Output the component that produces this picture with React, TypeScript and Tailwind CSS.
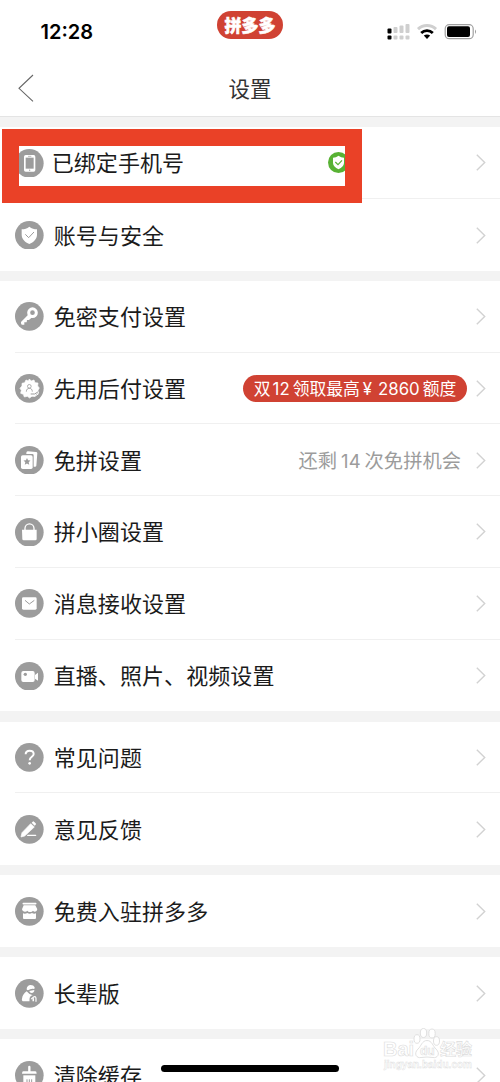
import type { ReactNode } from "react";

const dark = "#9c9c9c";

const glyphs: Record<string, ReactNode> = {
  phone: (
    <>
      <rect x="27" y="18" width="34" height="50" rx="5" fill="#fff" />
      <rect x="32" y="26" width="24" height="33" fill={dark} />
      <path d="M39 22h10" stroke={dark} strokeWidth="2" />
      <circle cx="44" cy="63.5" r="2" fill={dark} />
    </>
  ),
  shield: (
    <>
      <path d="M43 17C50 23 58 24 66 25V41C66 54 56 63 43 69C30 63 20 54 20 41V25C29 24 36 23 43 17Z" fill="#fff" />
      <path d="M31 40l10 10 16-17" fill="none" stroke={dark} strokeWidth="3" />
    </>
  ),
  key: (
    <>
      <circle cx="52.5" cy="32" r="11.5" fill="none" stroke="#fff" strokeWidth="9" />
      <path d="M41 37L18 60q-1 4 2 8h8v-7h7l1-7h6l10-9z" fill="#fff" />
    </>
  ),
  badge: (
    <>
      <path
        d="M43 15l6 6 8-3 3 8 9 1-1 9 5 6-4 7 2 8-7 2-4 8-9-1-7 6-7-5-9 2-3-8-8-3 2-9-4-6 6-7v-8l8-2 4-8 7 3z"
        fill="#fff"
        stroke="#fff"
        strokeWidth="2"
        strokeLinejoin="round"
      />
      <circle cx="43" cy="37" r="5.5" fill="none" stroke={dark} strokeWidth="2.5" />
      <path d="M34 53c0-7 4-10 9-10s9 3 9 10" fill="none" stroke={dark} strokeWidth="2.5" />
      <path d="M47 60h12l11-7" fill="none" stroke={dark} strokeWidth="3" />
      <path d="M47 66h14l10-7" fill="none" stroke="#fff" strokeWidth="3" />
    </>
  ),
  cards: (
    <>
      <path d="M34 20q1-4 5-4l24 2q4 0 4 4l-3 37q0 3-4 3h-4V28q0-4-4-4H34z" fill="#fff" />
      <rect x="18" y="28" width="35" height="41" rx="5" fill="#fff" />
      <path d="M36 36l3.3 7 7.2.8-5.4 4.9 1.6 7.3-6.7-3.8-6.7 3.8 1.6-7.3-5.4-4.9 7.2-.8z" fill={dark} />
    </>
  ),
  lock: (
    <>
      <path d="M30 37v-6a13 13 0 0 1 27 0v6" fill="none" stroke="#fff" strokeWidth="4" />
      <path d="M21 35H65V63q0 4-4 4H26q-4 0-4-4z" fill="#fff" />
    </>
  ),
  mail: (
    <>
      <rect x="21" y="25" width="44" height="37" rx="4" fill="#fff" />
      <path d="M30 34l13 11 15-11" fill="none" stroke={dark} strokeWidth="3" />
    </>
  ),
  camera: (
    <>
      <rect x="19" y="27" width="40" height="33" rx="6" fill="#fff" />
      <path d="M60 39l9-7v24l-9-6z" fill="#fff" />
      <circle cx="31" cy="37" r="5" fill={dark} />
    </>
  ),
  question: (
    <>
      <path d="M32 34c0-7 5-11 12-11s12 4 12 10c0 9-12 8-12 19" fill="none" stroke="#fff" strokeWidth="6" />
      <circle cx="44" cy="61" r="4" fill="#fff" />
    </>
  ),
  pen: (
    <>
      <path d="M47 26l11 10-29 27-11 3 3-13z" fill="#fff" stroke="#fff" strokeWidth="2" strokeLinejoin="round" />
      <path d="M50 23l3-3q2-2 4 0l5 5q2 2 0 4l-3 3z" fill="#fff" />
      <path d="M38 61H62" stroke="#fff" strokeWidth="4" strokeLinecap="round" />
    </>
  ),
  shop: (
    <>
      <path d="M25 20H62" stroke="#fff" strokeWidth="5" strokeLinecap="round" />
      <path d="M26 25H61L67 37q-1 7-7 7-4 0-6-3-3 5-10 4-5 0-7-4-3 4-8 3-7 0-8-7z" fill="#fff" />
      <path d="M24 49q6 3 13-1 7 5 14 0 6 4 12 1V63q0 3-3 3H27q-3 0-3-3z" fill="#fff" />
    </>
  ),
  elder: (
    <>
      <path d="M35 30q1-11 12-12 9 0 12 7l-1 5q-11-2-19 4-5-1-4-4z" fill="#fff" />
      <path d="M43 36l15-3q0 8-8 9-6 0-7-6z" fill="#fff" />
      <path d="M35 37q7 9 15 10 9 7 7 20H26q-7-1-5-8 2-14 14-22z" fill="#fff" />
      <path d="M48 69V60q1-7 6-7 8-1 8 6v9" fill="none" stroke={dark} strokeWidth="9" />
      <path d="M49 60l7-6q6-3 7 4v10" fill="none" stroke="#fff" strokeWidth="3.5" />
    </>
  ),
  brush: (
    <>
      <path d="M43 18V32" stroke="#fff" strokeWidth="7" strokeLinecap="round" />
      <path d="M25 31H61Q65 31 65 38H21Q21 31 25 31Z" fill="#fff" />
      <path d="M25 43H61V71H25Z" fill="#fff" />
      <path d="M36 55V72M43 55V72M50 55V72" stroke={dark} strokeWidth="3" />
    </>
  ),
};

type Row = { icon: string; label: string; note?: boolean; promo?: boolean };

const sections: Row[][] = [
  [
    { icon: "phone", label: "已绑定手机号" },
    { icon: "shield", label: "账号与安全" },
  ],
  [
    { icon: "key", label: "免密支付设置" },
    { icon: "badge", label: "先用后付设置", promo: true },
    { icon: "cards", label: "免拼设置", note: true },
    { icon: "lock", label: "拼小圈设置" },
    { icon: "mail", label: "消息接收设置" },
    { icon: "camera", label: "直播、照片、视频设置" },
  ],
  [
    { icon: "question", label: "常见问题" },
    { icon: "pen", label: "意见反馈" },
  ],
  [{ icon: "shop", label: "免费入驻拼多多" }],
  [{ icon: "elder", label: "长辈版" }],
  [{ icon: "brush", label: "清除缓存" }],
];

function StatusBar() {
  return (
    <div className="grid h-[60px] grid-cols-[1fr_66px_1fr] items-start pr-[23px] pl-[23px]">
      <div className="pt-[18px] pl-[17.5px] text-[20px] leading-7 font-semibold text-black">12:28</div>
      <div className="mt-[11px] flex h-[28px] w-[66px] items-center justify-center rounded-full bg-[#d04233] pb-px font-['Noto_Sans_CJK_SC',sans-serif] text-[17px] leading-none font-black text-white [-webkit-text-stroke:0.5px_white]">
        拼多多
      </div>
      <svg className="mt-[22px] h-[20px] w-[92px] justify-self-end" viewBox="385 22 92 20">
        <g fill="#cfcfcf">
          <rect x="393.5" y="27" width="4" height="6" rx="1" />
          <rect x="399.5" y="25.5" width="4" height="7.5" rx="1" />
          <rect x="405.5" y="24" width="4" height="9" rx="1" />
          <rect x="393.5" y="35.5" width="4" height="4" rx="1" />
          <rect x="399.5" y="35.5" width="4" height="4" rx="1" />
          <rect x="405.5" y="35.5" width="4" height="4" rx="1" />
        </g>
        <rect x="387.5" y="28.5" width="4" height="5" rx="1" />
        <rect x="387.5" y="35.5" width="4" height="4" rx="1" />
        <path d="M418 29.2a13 13 0 0 1 18 0" fill="none" stroke="#cfcfcf" strokeWidth="3" />
        <path d="M421.2 33a8.4 8.4 0 0 1 11.6 0" fill="none" stroke="#000" strokeWidth="2.8" />
        <path d="M423.8 35.6q3.2-2.4 6.4 0l-3.2 3.4z" />
        <rect x="445.2" y="24.7" width="28" height="14" rx="4" fill="none" stroke="#a0a0a0" strokeWidth="1.2" />
        <rect x="447" y="26.3" width="23" height="10.8" rx="2" />
        <path d="M475 29.5q2 2 0 4.5z" fill="#999" />
      </svg>
    </div>
  );
}

function SettingRow({ row, divider }: { row: Row; divider: boolean }) {
  return (
    <div className="flex h-[71.75px] pl-[15px]">
      <div className={"flex flex-1 items-center pt-px pr-[14px] " + (divider ? "border-b border-[#f0f0f0]" : "")}>
        <svg className="size-[28.67px] shrink-0" viewBox="0 0 86 86">
          <circle cx="43" cy="43" r="43" fill={dark} />
          {glyphs[row.icon]}
        </svg>
        <span
          className={
            "flex-1 pt-[2px] text-[22px] tracking-[0.08px] whitespace-nowrap text-[#1b1b1b] " +
            (row.icon === "phone" ? "pl-[8px]" : "pl-[10px]")
          }
        >
          {row.label}
        </span>
        {row.icon === "phone" && (
          <svg className="mr-[127px] size-[21px]" viewBox="0 0 63 63">
            <circle cx="31.5" cy="31.5" r="31.5" fill="#58b234" />
            <path d="M31.5 11Q39 17 48 17V33Q47 45 31.5 52Q16 45 15 33V17Q24 17 31.5 11Z" fill="#fff" />
            <path d="M22 30l8 8 12-13" fill="none" stroke="#58b234" strokeWidth="3.5" />
          </svg>
        )}
        {row.promo && (
          <span className="mr-[9px] flex h-[27.5px] w-[224px] items-center justify-center rounded-full bg-[#d04233] pt-[2px] text-[16.8px] whitespace-nowrap text-white">
            双<span className="mr-[3px] ml-[2px]">12</span>领取最高<span className="ml-[3px]">¥</span>
            <span className="mr-[3px] ml-[6px]">2860</span>额度
          </span>
        )}
        {row.note && (
          <span className="mr-[15px] pt-[2px] text-[19.3px] whitespace-nowrap text-[#9c9c9c]">
            还剩<span className="mr-[4px] ml-[4px] text-[18.5px]">14</span>次免拼机会
          </span>
        )}
        <svg className="h-[17px] w-[10px] shrink-0" viewBox="0 0 10 17">
          <path d="M.8 .8L8.7 8.5.8 16.2" fill="none" stroke="#d2d2d2" strokeWidth="1.4" />
        </svg>
      </div>
    </div>
  );
}

function Watermark() {
  return (
    <svg className="absolute top-[1026px] left-[380px] h-[46px] w-[98px]" viewBox="380 1026 98 46">
      <g fill="#fff" stroke="#dcdcdc" strokeWidth=".9">
        <ellipse cx="417" cy="1039" rx="3" ry="4.3" />
        <ellipse cx="423.5" cy="1033" rx="3.2" ry="4.5" />
        <ellipse cx="432" cy="1033.5" rx="3.2" ry="4.5" />
        <ellipse cx="436.5" cy="1041" rx="3" ry="4.3" />
        <path d="M427 1040.5c5 0 6 6 9 8.500 5 5 1 9.500-3 8.500q-6-1-12 0c-4 1-8-3.500-3-8.500 3-2.500 4-8.500 9-8.500z" />
      </g>
      <g
        className="font-['Liberation_Sans','Noto_Sans_CJK_SC',sans-serif] font-bold"
        fill="#fff"
        stroke="#dcdcdc"
        strokeWidth=".6"
      >
        <text x="383" y="1056" fontSize="20" textLength="31">Bai</text>
        <text x="420" y="1055" fontSize="12">du</text>
        <text x="440" y="1055" fontSize="16">经验</text>
        <text x="384" y="1068" fontSize="10" strokeWidth=".4" textLength="88">jingyan.baidu.com</text>
      </g>
    </svg>
  );
}

export default function App() {
  return (
    <div className="relative flex h-[1082px] w-[500px] flex-col overflow-hidden bg-[#f3f3f3] font-['Inter','Noto_Sans_CJK_SC',sans-serif]">
      <header className="h-[117px] shrink-0 border-b border-[#e4e4e4] bg-white">
        <StatusBar />
        <div className="grid h-[56px] grid-cols-3 items-center px-[18px]">
          <svg className="h-[28px] w-[16px]" viewBox="0 0 16 28">
            <path d="M15 1L1 14.3 15 27.3" fill="none" stroke="#666" strokeWidth="1.1" />
          </svg>
          <h1 className="pt-[2px] text-center text-[21.5px] text-[#333]">设置</h1>
        </div>
      </header>

      <main className="flex flex-col gap-[10.25px] pt-[10px]">
        {sections.map((rows) => (
          <section key={rows[0].label} className="bg-white">
            {rows.map((row, i) => (
              <SettingRow key={row.label} row={row} divider={i < rows.length - 1} />
            ))}
          </section>
        ))}
      </main>

      <div className="absolute top-[129px] left-[2px] h-[73.5px] w-[359.5px] border-[17px] border-[#ea4127]" />
      <Watermark />
      <div className="absolute top-[1065px] left-[161px] h-[6.5px] w-[178px] rounded-full bg-black" />
    </div>
  );
}
